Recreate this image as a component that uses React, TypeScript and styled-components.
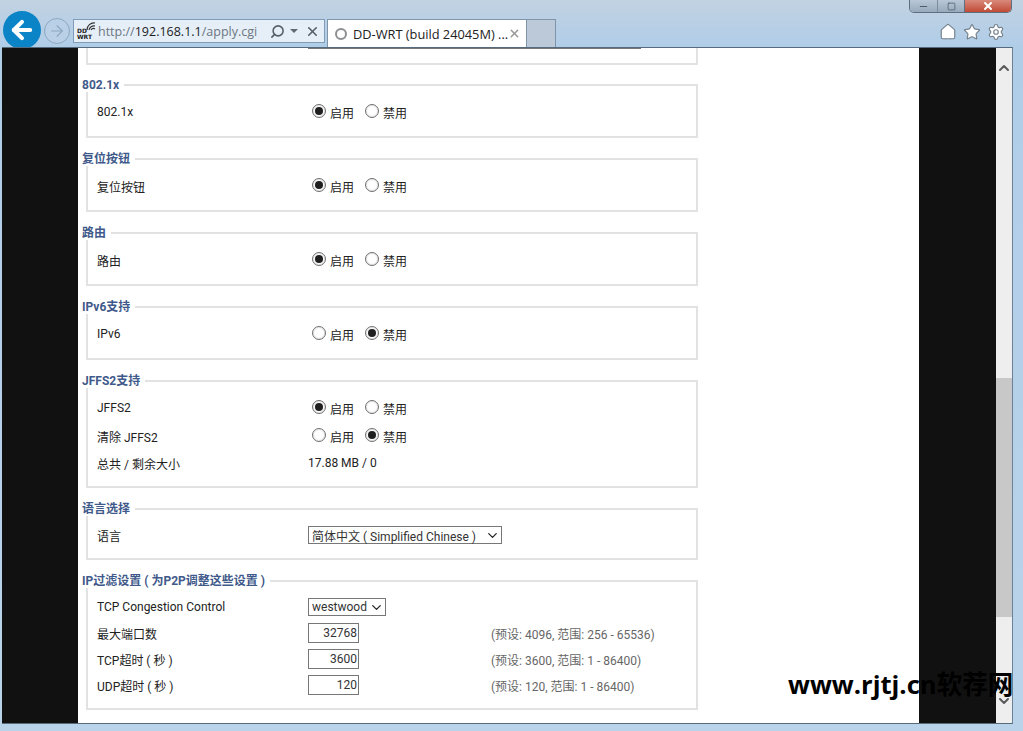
import React from 'react';
import styled, { createGlobalStyle } from 'styled-components';
import { ArrowLeft, ArrowRight, ChevronDown, ChevronUp, Home, Minus, Search, Settings, Square, Star, X } from 'lucide-react';

const GlobalStyle = createGlobalStyle`
  html, body { margin: 0; padding: 0; height: 100%; overflow: hidden; background: #b9d3ea; }
  body { font-family: Roboto, "Noto Sans CJK SC", sans-serif; font-size: 12px; color: #222; }
  #root { height: 100%; }
`;

const WindowFrame = styled.div`
  position: relative;
  height: 731px;
  display: flex;
  flex-direction: column;
  background: linear-gradient(180deg, #c2d2e2 0, #b0cde8 46px, #b9d3ea 100%);
`;

const Chrome = styled.header`
  height: 47px;
  flex: none;
  display: flex;
  align-items: flex-start;
  justify-content: space-between;
  padding: 0 11px 0 3px;
  box-sizing: border-box;
`;

const NavGroup = styled.div`
  display: flex;
  align-items: flex-start;
`;

const BackButton = styled.button`
  width: 38px;
  height: 38px;
  margin-top: 11px;
  padding: 0;
  border: none;
  border-radius: 50%;
  background: #0a84c6;
  color: #fff;
  display: flex;
  align-items: center;
  justify-content: center;
`;

const ForwardButton = styled.button`
  width: 26px;
  height: 26px;
  margin: 18px 0 0 3px;
  padding: 0;
  border: 1px solid #8ea8c0;
  border-radius: 50%;
  background: #b9d0e6;
  color: #8ea8c0;
  display: flex;
  align-items: center;
  justify-content: center;
`;

const AddressBar = styled.div`
  width: 252px;
  height: 24px;
  margin: 19px 0 0 3px;
  box-sizing: border-box;
  border: 1px solid #7f9db9;
  background: #e6eff8;
  display: flex;
  align-items: center;
  padding: 0 4px 0 3px;
  font-family: "Open Sans", "Noto Sans", sans-serif;
  font-size: 12.5px;
  color: #6d7680;
`;

const Favicon = styled.span`
  position: relative;
  width: 19px;
  height: 18px;
  flex: none;
  margin-right: 2px;
  font-family: "DejaVu Sans", sans-serif;
  font-size: 6px;
  font-weight: 700;
  line-height: 6px;
  color: #222;
  display: flex;
  flex-direction: column;
  justify-content: flex-end;
`;

const FaviconWave = styled.svg`
  position: absolute;
  top: 0;
  right: 0;
`;

const Url = styled.span`
  flex: 1;
  white-space: nowrap;
`;

const UrlHost = styled.span`
  color: #1c1c1c;
`;

const AddressAction = styled.span<{ $gap?: number }>`
  display: flex;
  align-items: center;
  margin-left: ${p => p.$gap ?? 4}px;
  color: #555f69;
`;

const Caret = styled.span`
  width: 0;
  height: 0;
  border-left: 4px solid transparent;
  border-right: 4px solid transparent;
  border-top: 4px solid #5f6973;
`;

const ActiveTab = styled.div`
  width: 200px;
  height: 28px;
  margin: 19px 0 0 2px;
  box-sizing: border-box;
  border: 1px solid #7f95a9;
  border-bottom: none;
  background: #fff;
  display: flex;
  align-items: center;
  padding: 0 5px 0 7px;
  font-family: "Open Sans", "Noto Sans", sans-serif;
  font-size: 12.8px;
  color: #222;
`;

const TabSpinner = styled.span`
  width: 12px;
  height: 12px;
  flex: none;
  box-sizing: border-box;
  border: 2.5px solid #8b8f92;
  border-radius: 50%;
  margin-right: 6px;
`;

const TabTitle = styled.span`
  flex: 1;
  white-space: nowrap;
`;

const NewTab = styled.div`
  width: 29px;
  height: 28px;
  margin-top: 19px;
  box-sizing: border-box;
  border: 1px solid #7f95a9;
  border-left: none;
  border-bottom: none;
  background: #bcc9d8;
`;

const ToolGroup = styled.div`
  display: flex;
  flex-direction: column;
  align-items: flex-end;
`;

const WindowControls = styled.div`
  display: flex;
  height: 13px;
  box-sizing: border-box;
  border: 1px solid #5d6f80;
  border-top: none;
  border-radius: 0 0 5px 5px;
  overflow: hidden;
`;

const WindowButton = styled.span<{ $width: number; $close?: boolean }>`
  width: ${p => p.$width}px;
  display: flex;
  align-items: center;
  justify-content: center;
  border-left: ${p => (p.$close ? '1px solid #5d6f80' : 'none')};
  border-right: ${p => (p.$width === 27 ? '1px solid #7d8d9c' : 'none')};
  color: ${p => (p.$close ? '#fff' : '#4e5c69')};
  background: ${p => (p.$close
    ? 'linear-gradient(180deg, #d98a7c, #c04a35)'
    : 'linear-gradient(180deg, #b8c8d8, #98aabc)')};
`;

const ToolIcons = styled.div`
  display: flex;
  gap: 6px;
  margin: 10px 7px 0 0;
  color: #76838f;
  svg { fill: #fff; }
`;

const Viewport = styled.div`
  flex: none;
  height: 677px;
  margin-right: 10px;
  margin-left: 2px;
  display: flex;
  border-top: 1px solid #566b7e;
  border-right: 1px solid #6a8198;
  border-bottom: 1px solid #566b7e;
  box-sizing: border-box;
`;

const Gutter = styled.div<{ $width: number }>`
  width: ${p => p.$width}px;
  flex: none;
  background: #111;
`;

const Page = styled.main`
  width: 841px;
  flex: none;
  background: #fff;
  padding-left: 8px;
  box-sizing: border-box;
  overflow: hidden;
`;

const ClippedSection = styled.div`
  width: 612px;
  height: 17px;
  box-sizing: border-box;
  border: 2px solid #e2e2e2;
  border-top: none;
  margin-bottom: 13px;
  padding-left: 220px;
`;

const ClippedInput = styled.div`
  width: 333px;
  height: 1px;
  background: #777;
`;

const Section = styled.fieldset`
  width: 612px;
  min-width: 0;
  box-sizing: border-box;
  margin: 0 0 14px;
  padding: 6px 0 10px 9px;
  border: 2px solid #e2e2e2;
`;

const SectionTitle = styled.legend`
  margin-left: -15px;
  padding: 0 5px 0 0;
  height: 14px;
  line-height: 14px;
  font-size: 12px;
  font-weight: 700;
  color: #3f5a8a;
  background: #fff;
  white-space: nowrap;
`;

const Row = styled.div<{ $height?: number }>`
  height: ${p => p.$height ?? 28}px;
  display: grid;
  grid-template-columns: 211px 183px 1fr;
  align-items: center;
`;

const Label = styled.span`
  color: #222;
`;

const RadioGroup = styled.div`
  display: flex;
  align-items: center;
  padding-left: 4px;
  margin-bottom: 2px;
`;

const RadioOption = styled.label`
  display: flex;
  align-items: center;
  margin-right: 11px;
  color: #222;
`;

const RadioText = styled.span`
  margin: 3px 0 0 4px;
`;

const Radio = styled.input.attrs({ type: 'radio', readOnly: true })`
  appearance: none;
  width: 14px;
  height: 14px;
  margin: 0;
  border: 1px solid #6f6f6f;
  border-radius: 50%;
  background: #fff;
  display: grid;
  place-items: center;
  box-shadow: inset 0 0 2px #bbb;
  &:checked::before {
    content: '';
    width: 8px;
    height: 8px;
    border-radius: 50%;
    background: #1f1f1f;
  }
`;

const Select = styled.div<{ $width: number }>`
  width: ${p => p.$width}px;
  height: 18px;
  box-sizing: border-box;
  border: 1px solid #777;
  background: #fff;
  display: flex;
  align-items: center;
  justify-content: space-between;
  padding: 0 1px 0 3px;
  color: #333;
`;

const NumberInput = styled.input.attrs({ type: 'text', readOnly: true })`
  width: 51px;
  height: 20px;
  box-sizing: border-box;
  border: 1px solid #777;
  padding: 0 1px;
  text-align: right;
  font: inherit;
  color: #333;
`;

const Hint = styled.span`
  color: #666;
`;

const Scrollbar = styled.aside`
  flex: 1;
  background: #eee;
  display: flex;
  flex-direction: column;
  align-items: center;
  color: #5a5a5a;
`;

const ScrollArrow = styled.span<{ $top: number }>`
  height: 16px;
  margin-top: ${p => p.$top}px;
  display: flex;
`;

const ScrollThumb = styled.div`
  width: 100%;
  height: 239px;
  margin-top: 302px;
  background: #c8c8c8;
`;

const Watermark = styled.div`
  position: absolute;
  left: 788px;
  top: 670px;
  font-family: "Open Sans", "Noto Sans CJK SC", sans-serif;
  font-size: 25.6px;
  font-weight: 700;
  line-height: 30px;
  color: #000;
  white-space: nowrap;
`;

const Toggle: React.FC<{ name: string; enabled: boolean }> = ({ name, enabled }) => (
  <RadioGroup>
    <RadioOption><Radio name={name} defaultChecked={enabled} /><RadioText>启用</RadioText></RadioOption>
    <RadioOption><Radio name={name} defaultChecked={!enabled} /><RadioText>禁用</RadioText></RadioOption>
  </RadioGroup>
);

const SimpleToggle: React.FC<{ title: string; label: string; name: string; enabled: boolean }> = ({ title, label, name, enabled }) => (
  <Section>
    <SectionTitle>{title}</SectionTitle>
    <Row><Label>{label}</Label><Toggle name={name} enabled={enabled} /></Row>
  </Section>
);

const limits = [
  { label: '最大端口数', value: '32768', hint: '(预设: 4096, 范围: 256 - 65536)' },
  { label: 'TCP超时 ( 秒 )', value: '3600', hint: '(预设: 3600, 范围: 1 - 86400)' },
  { label: 'UDP超时 ( 秒 )', value: '120', hint: '(预设: 120, 范围: 1 - 86400)' },
];

const App: React.FC = () => (
  <WindowFrame>
    <GlobalStyle />
    <Chrome>
      <NavGroup>
        <BackButton><ArrowLeft size={28} strokeWidth={3.5} /></BackButton>
        <ForwardButton><ArrowRight size={18} strokeWidth={1.5} /></ForwardButton>
        <AddressBar>
          <Favicon>
            <FaviconWave width="10" height="9" viewBox="0 0 10 9" fill="none" stroke="#333" strokeWidth="1.2">
              <path d="M1 8a7 7 0 0 1 8-7M3 8a5 5 0 0 1 6-4M5 8a3 3 0 0 1 4-1" />
            </FaviconWave>
            <span>DD</span>
            <span>WRT</span>
          </Favicon>
          <Url>http://<UrlHost>192.168.1.1</UrlHost>/apply.cgi</Url>
          <AddressAction><Search size={15} strokeWidth={2.5} style={{ transform: 'scaleX(-1)' }} /></AddressAction>
          <AddressAction $gap={5}><Caret /></AddressAction>
          <AddressAction $gap={7}><X size={15} strokeWidth={2.5} /></AddressAction>
        </AddressBar>
        <ActiveTab>
          <TabSpinner />
          <TabTitle>DD-WRT (build 24045M) ...</TabTitle>
          <X size={13} strokeWidth={3} color="#9a9a9a" />
        </ActiveTab>
        <NewTab />
      </NavGroup>
      <ToolGroup>
        <WindowControls>
          <WindowButton $width={27}><Minus size={11} strokeWidth={2.5} /></WindowButton>
          <WindowButton $width={26}><Square size={9} strokeWidth={2} /></WindowButton>
          <WindowButton $width={46} $close><X size={12} strokeWidth={4} /></WindowButton>
        </WindowControls>
        <ToolIcons>
          <Home size={18} strokeWidth={1.6} />
          <Star size={18} strokeWidth={1.6} />
          <Settings size={18} strokeWidth={1.6} />
        </ToolIcons>
      </ToolGroup>
    </Chrome>
    <Viewport>
      <Gutter $width={76} />
      <Page>
        <ClippedSection><ClippedInput /></ClippedSection>
        <SimpleToggle title="802.1x" label="802.1x" name="dot1x" enabled />
        <SimpleToggle title="复位按钮" label="复位按钮" name="reset" enabled />
        <SimpleToggle title="路由" label="路由" name="routing" enabled />
        <SimpleToggle title="IPv6支持" label="IPv6" name="ipv6" enabled={false} />
        <Section>
          <SectionTitle>JFFS2支持</SectionTitle>
          <Row><Label>JFFS2</Label><Toggle name="jffs" enabled /></Row>
          <Row><Label>清除 JFFS2</Label><Toggle name="jffsClean" enabled={false} /></Row>
          <Row $height={26}><Label>总共 / 剩余大小</Label><span>17.88 MB / 0</span></Row>
        </Section>
        <Section>
          <SectionTitle>语言选择</SectionTitle>
          <Row $height={26}>
            <Label>语言</Label>
            <Select $width={194}>简体中文 ( Simplified Chinese )<ChevronDown size={15} strokeWidth={2} color="#222" /></Select>
          </Row>
        </Section>
        <Section>
          <SectionTitle>IP过滤设置 ( 为P2P调整这些设置 )</SectionTitle>
          <Row $height={26}>
            <Label>TCP Congestion Control</Label>
            <Select $width={78}>westwood <ChevronDown size={15} strokeWidth={2} color="#222" /></Select>
          </Row>
          {limits.map(item => (
            <Row $height={26} key={item.label}>
              <Label>{item.label}</Label>
              <NumberInput defaultValue={item.value} />
              <Hint>{item.hint}</Hint>
            </Row>
          ))}
        </Section>
      </Page>
      <Gutter $width={77} />
      <Scrollbar>
        <ScrollArrow $top={12}><ChevronUp size={16} strokeWidth={3} /></ScrollArrow>
        <ScrollThumb />
        <ScrollArrow $top={76}><ChevronDown size={16} strokeWidth={3} /></ScrollArrow>
      </Scrollbar>
    </Viewport>
    <Watermark>www.rjtj.cn软荐网</Watermark>
  </WindowFrame>
);

export default App;
